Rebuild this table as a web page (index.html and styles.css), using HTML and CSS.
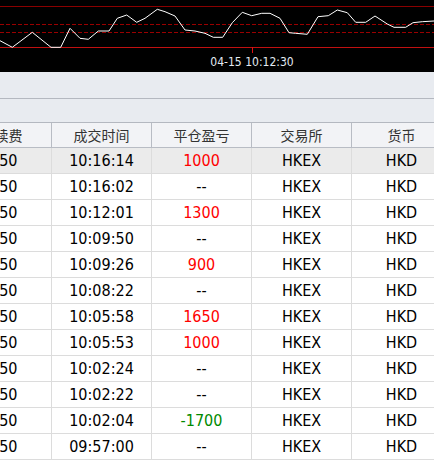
FILE: index.html
```html
<!DOCTYPE html>
<html lang="zh">
<head>
<meta charset="utf-8">
<link rel="stylesheet" href="styles.css">
</head>
<body>
<div class="chart">
  <svg width="434" height="72" viewBox="0 0 434 72">
    <rect x="0" y="0" width="434" height="72" fill="#000"/>
    <line x1="0" y1="6.5" x2="434" y2="6.5" stroke="#8a0000" stroke-width="1"/>
    <line x1="0" y1="24.5" x2="434" y2="24.5" stroke="#9a0000" stroke-width="1" stroke-dasharray="4 2"/>
    <line x1="0" y1="32.5" x2="434" y2="32.5" stroke="#9a0000" stroke-width="1" stroke-dasharray="4 2"/>
    <line x1="0" y1="47.5" x2="434" y2="47.5" stroke="#c01010" stroke-width="1"/>
    <line x1="252.5" y1="47" x2="252.5" y2="53" stroke="#e01010" stroke-width="1"/>
    <polyline fill="none" stroke="#ffffff" stroke-width="1"
      points="0,40.7 12.3,47.3 32.3,32.3 51,47.3 60.7,47.3 70,28.3 80,38.3 88.3,39.3 98.3,31 109,31 117.3,18.3 126.7,15 136.7,22.3 145,18.3 157.3,9.3 165,11.7 175,16 185,30 195,31 205,33.3 213.3,37.3 222.7,37.3 232.3,22.7 242.3,12.3 251.7,15.7 261.7,13.3 270,13.3 280,18.3 289,32.7 295.7,33.3 307.3,34.3 318,16.7 328.3,15.7 337.3,10 347.3,12.7 355.7,22.3 365.7,22.3 375,16 387.3,24 394,27.3 405.7,27.3 413,22.7 422.3,21.7 434,21"/>
    <text x="252" y="65.5" text-anchor="middle" class="time-label">04-15 10:12:30</text>
  </svg>
</div>
<div class="band band-one"></div>
<div class="band band-two"></div>
<div class="table">
  <div class="row head">
    <div class="cell">手续费</div>
    <div class="cell">成交时间</div>
    <div class="cell">平仓盈亏</div>
    <div class="cell">交易所</div>
    <div class="cell">货币</div>
  </div>
  <div class="row sel">
    <div class="cell">7.50</div><div class="cell">10:16:14</div><div class="cell up">1000</div><div class="cell">HKEX</div><div class="cell">HKD</div>
  </div>
  <div class="row">
    <div class="cell">7.50</div><div class="cell">10:16:02</div><div class="cell">--</div><div class="cell">HKEX</div><div class="cell">HKD</div>
  </div>
  <div class="row">
    <div class="cell">7.50</div><div class="cell">10:12:01</div><div class="cell up">1300</div><div class="cell">HKEX</div><div class="cell">HKD</div>
  </div>
  <div class="row">
    <div class="cell">7.50</div><div class="cell">10:09:50</div><div class="cell">--</div><div class="cell">HKEX</div><div class="cell">HKD</div>
  </div>
  <div class="row">
    <div class="cell">7.50</div><div class="cell">10:09:26</div><div class="cell up">900</div><div class="cell">HKEX</div><div class="cell">HKD</div>
  </div>
  <div class="row">
    <div class="cell">7.50</div><div class="cell">10:08:22</div><div class="cell">--</div><div class="cell">HKEX</div><div class="cell">HKD</div>
  </div>
  <div class="row">
    <div class="cell">7.50</div><div class="cell">10:05:58</div><div class="cell up">1650</div><div class="cell">HKEX</div><div class="cell">HKD</div>
  </div>
  <div class="row">
    <div class="cell">7.50</div><div class="cell">10:05:53</div><div class="cell up">1000</div><div class="cell">HKEX</div><div class="cell">HKD</div>
  </div>
  <div class="row">
    <div class="cell">7.50</div><div class="cell">10:02:24</div><div class="cell">--</div><div class="cell">HKEX</div><div class="cell">HKD</div>
  </div>
  <div class="row">
    <div class="cell">7.50</div><div class="cell">10:02:22</div><div class="cell">--</div><div class="cell">HKEX</div><div class="cell">HKD</div>
  </div>
  <div class="row">
    <div class="cell">7.50</div><div class="cell">10:02:04</div><div class="cell down">-1700</div><div class="cell">HKEX</div><div class="cell">HKD</div>
  </div>
  <div class="row">
    <div class="cell">7.50</div><div class="cell">09:57:00</div><div class="cell">--</div><div class="cell">HKEX</div><div class="cell">HKD</div>
  </div>
</div>
</body>
</html>
```
FILE: styles.css
```css
html, body {
  margin: 0;
  padding: 0;
  background: #ffffff;
  overflow: hidden;
  width: 434px;
  height: 463px;
}
.chart svg {
  display: block;
}
.time-label {
  font-family: "DejaVu Sans Condensed", "DejaVu Sans", sans-serif;
  font-stretch: condensed;
  font-size: 12px;
  fill: #e2eaf2;
}
.band {
  background: #e8ebf0;
  border-bottom: 1px solid #b4b8c0;
}
.band-one {
  height: 26px;
}
.band-two {
  height: 23px;
}
.table {
  margin-left: -48px;
  width: 500px;
}
.row {
  display: grid;
  grid-template-columns: repeat(5, 100px);
  height: 26px;
  border-bottom: 1px solid #dcdcdc;
  box-sizing: border-box;
  font-family: "DejaVu Sans Condensed", "DejaVu Sans", sans-serif;
  font-stretch: condensed;
  font-size: 16px;
  color: #000;
}
.row.head {
  height: 25px;
  background: #f2f3f6;
  border-bottom: 1px solid #b8bcc4;
  font-family: "Noto Sans CJK SC", sans-serif;
  font-size: 14px;
  color: #333;
}
.row.sel {
  background: #ebebeb;
}
.cell {
  display: flex;
  align-items: center;
  justify-content: center;
  border-right: 1px solid #dcdcdc;
  white-space: nowrap;
}
.head .cell {
  border-right-color: #b8bcc4;
}
.cell.up {
  color: #ff0000;
}
.cell.down {
  color: #008a00;
}
```
